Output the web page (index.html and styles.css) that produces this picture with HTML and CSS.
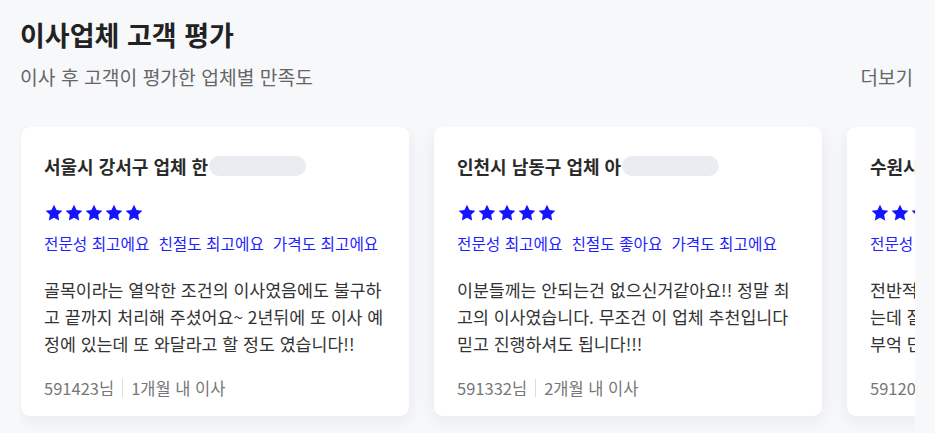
FILE: index.html
```html
<!DOCTYPE html>
<html lang="ko">
<head>
<meta charset="utf-8">
<title>이사업체 고객 평가</title>
<link rel="stylesheet" href="styles.css">
</head>
<body>
<section class="reviews">
  <header class="reviews-head">
    <div class="head-text">
      <h1 class="head-title">이사업체 고객 평가</h1>
      <p class="head-sub">이사 후 고객이 평가한 업체별 만족도</p>
    </div>
    <a class="more" href="#">더보기</a>
  </header>

  <div class="track">
    <article class="card">
      <h2 class="card-title">서울시 강서구 업체 한<span class="mask"></span></h2>
      <div class="stars">
        <svg viewBox="0 0 24 24"><path d="M12 2l3.09 6.26L22 9.27l-5 4.87 1.18 6.88L12 17.77l-6.18 3.25L7 14.14 2 9.27l6.91-1.01L12 2z"/></svg>
        <svg viewBox="0 0 24 24"><path d="M12 2l3.09 6.26L22 9.27l-5 4.87 1.18 6.88L12 17.77l-6.18 3.25L7 14.14 2 9.27l6.91-1.01L12 2z"/></svg>
        <svg viewBox="0 0 24 24"><path d="M12 2l3.09 6.26L22 9.27l-5 4.87 1.18 6.88L12 17.77l-6.18 3.25L7 14.14 2 9.27l6.91-1.01L12 2z"/></svg>
        <svg viewBox="0 0 24 24"><path d="M12 2l3.09 6.26L22 9.27l-5 4.87 1.18 6.88L12 17.77l-6.18 3.25L7 14.14 2 9.27l6.91-1.01L12 2z"/></svg>
        <svg viewBox="0 0 24 24"><path d="M12 2l3.09 6.26L22 9.27l-5 4.87 1.18 6.88L12 17.77l-6.18 3.25L7 14.14 2 9.27l6.91-1.01L12 2z"/></svg>
      </div>
      <ul class="tags">
        <li>전문성 최고에요</li>
        <li>친절도 최고에요</li>
        <li>가격도 최고에요</li>
      </ul>
      <p class="review">골목이라는 열악한 조건의 이사였음에도 불구하고 끝까지 처리해 주셨어요~ 2년뒤에 또 이사 예정에 있는데 또 와달라고 할 정도 였습니다!!</p>
      <p class="meta"><span>591423님</span><span class="sep"></span><span>1개월 내 이사</span></p>
    </article>

    <article class="card">
      <h2 class="card-title">인천시 남동구 업체 아<span class="mask"></span></h2>
      <div class="stars">
        <svg viewBox="0 0 24 24"><path d="M12 2l3.09 6.26L22 9.27l-5 4.87 1.18 6.88L12 17.77l-6.18 3.25L7 14.14 2 9.27l6.91-1.01L12 2z"/></svg>
        <svg viewBox="0 0 24 24"><path d="M12 2l3.09 6.26L22 9.27l-5 4.87 1.18 6.88L12 17.77l-6.18 3.25L7 14.14 2 9.27l6.91-1.01L12 2z"/></svg>
        <svg viewBox="0 0 24 24"><path d="M12 2l3.09 6.26L22 9.27l-5 4.87 1.18 6.88L12 17.77l-6.18 3.25L7 14.14 2 9.27l6.91-1.01L12 2z"/></svg>
        <svg viewBox="0 0 24 24"><path d="M12 2l3.09 6.26L22 9.27l-5 4.87 1.18 6.88L12 17.77l-6.18 3.25L7 14.14 2 9.27l6.91-1.01L12 2z"/></svg>
        <svg viewBox="0 0 24 24"><path d="M12 2l3.09 6.26L22 9.27l-5 4.87 1.18 6.88L12 17.77l-6.18 3.25L7 14.14 2 9.27l6.91-1.01L12 2z"/></svg>
      </div>
      <ul class="tags">
        <li>전문성 최고에요</li>
        <li>친절도 좋아요</li>
        <li>가격도 최고에요</li>
      </ul>
      <p class="review">이분들께는 안되는건 없으신거같아요!! 정말 최고의 이사였습니다. 무조건 이 업체 추천입니다 믿고 진행하셔도 됩니다!!!</p>
      <p class="meta"><span>591332님</span><span class="sep"></span><span>2개월 내 이사</span></p>
    </article>

    <article class="card">
      <h2 class="card-title">수원시 영통구 업체 이<span class="mask"></span></h2>
      <div class="stars">
        <svg viewBox="0 0 24 24"><path d="M12 2l3.09 6.26L22 9.27l-5 4.87 1.18 6.88L12 17.77l-6.18 3.25L7 14.14 2 9.27l6.91-1.01L12 2z"/></svg>
        <svg viewBox="0 0 24 24"><path d="M12 2l3.09 6.26L22 9.27l-5 4.87 1.18 6.88L12 17.77l-6.18 3.25L7 14.14 2 9.27l6.91-1.01L12 2z"/></svg>
        <svg viewBox="0 0 24 24"><path d="M12 2l3.09 6.26L22 9.27l-5 4.87 1.18 6.88L12 17.77l-6.18 3.25L7 14.14 2 9.27l6.91-1.01L12 2z"/></svg>
        <svg viewBox="0 0 24 24"><path d="M12 2l3.09 6.26L22 9.27l-5 4.87 1.18 6.88L12 17.77l-6.18 3.25L7 14.14 2 9.27l6.91-1.01L12 2z"/></svg>
        <svg viewBox="0 0 24 24"><path d="M12 2l3.09 6.26L22 9.27l-5 4.87 1.18 6.88L12 17.77l-6.18 3.25L7 14.14 2 9.27l6.91-1.01L12 2z"/></svg>
      </div>
      <ul class="tags">
        <li>전문성 최고에요</li>
        <li>친절도 최고에요</li>
        <li>가격도 좋아요</li>
      </ul>
      <p class="review">전반적으로 만족스러운 이사였습니다 짐이 많았는데 잘 챙겨주시고 꼼꼼하게 정리해 주셨어요 부억 단지까지 정리해 주셔서 감사합니다</p>
      <p class="meta"><span>591203님</span><span class="sep"></span><span>1개월 내 이사</span></p>
    </article>
  </div>
</section>
</body>
</html>
```

FILE: styles.css
```css
* {
  box-sizing: border-box;
}

html, body {
  margin: 0;
  padding: 0;
  background: #f7f8fa;
}

body {
  font-family: "Noto Sans CJK KR", "Noto Sans", sans-serif;
  color: #222;
  width: 935px;
  height: 433px;
  overflow: hidden;
}

.reviews {
  padding: 16px 20px 0 20px;
}

.reviews-head {
  display: flex;
  justify-content: space-between;
  align-items: flex-end;
}

.head-title {
  margin: 0;
  font-size: 27px;
  line-height: 38px;
  font-weight: 700;
  color: #222;
}

.head-sub {
  margin: 9px 0 0;
  font-size: 19.3px;
  line-height: 28px;
  color: #666;
}

.more {
  font-size: 19px;
  line-height: 28px;
  color: #666;
  text-decoration: none;
  margin-right: 2px;
}

.track {
  margin-top: 36px;
  display: flex;
  gap: 25px;
  overflow: hidden;
  padding: 0 0 24px 1px;
  margin-bottom: -24px;
}

.card {
  flex: 0 0 388px;
  background: #fff;
  border-radius: 9px;
  box-shadow: 0 4px 18px rgba(20, 30, 60, 0.07);
  padding: 27px 23px 17px;
}

.card-title {
  margin: 0;
  display: flex;
  align-items: center;
  font-size: 18px;
  line-height: 24px;
  font-weight: 700;
  color: #2a2a2a;
  white-space: nowrap;
}

.mask {
  display: inline-block;
  width: 97px;
  height: 20px;
  border-radius: 10px;
  background: #e9ecf0;
  margin-left: 1px;
}

.stars {
  display: flex;
  margin-top: 25px;
  height: 20px;
}

.stars svg {
  width: 20px;
  height: 20px;
  fill: #1414ff;
  flex: 0 0 20px;
}

.tags {
  list-style: none;
  margin: 10px 0 0;
  padding: 0;
  display: flex;
  gap: 9px;
  font-size: 15.7px;
  line-height: 22px;
  color: #1f1fff;
  white-space: nowrap;
}

.review {
  margin: 21px 0 0;
  font-size: 17.3px;
  line-height: 27px;
  color: #333;
}

.meta {
  margin: 20px 0 0;
  display: flex;
  align-items: center;
  font-size: 16.5px;
  line-height: 22px;
  color: #777;
  white-space: nowrap;
}

.sep {
  display: inline-block;
  width: 1px;
  height: 18px;
  background: #dcdcdc;
  margin: 0 8px;
}
```
